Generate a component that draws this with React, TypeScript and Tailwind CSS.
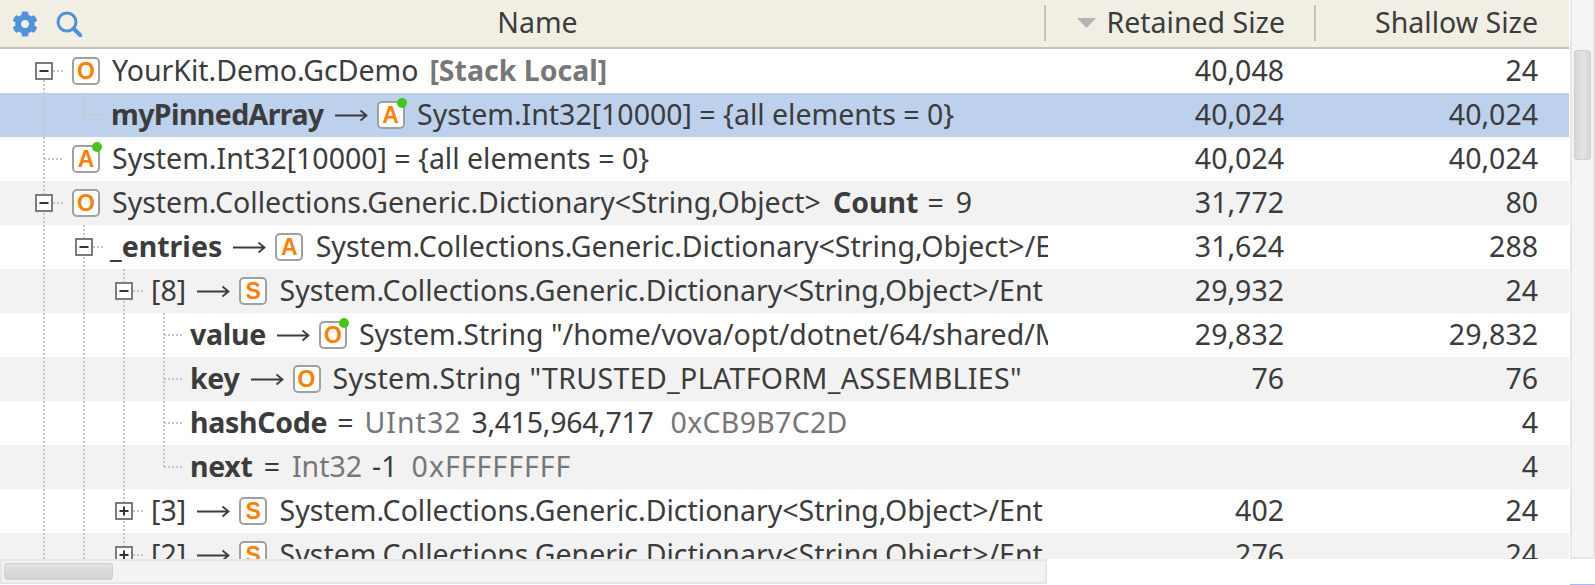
import { FaCog } from "react-icons/fa";

const font = "font-['Noto_Sans',sans-serif]";

type Guide = { v?: [number, number, number][]; h?: [number, number, number][] };

// dotted tree lines, drawn in row coordinates
const TreeLines = ({ v = [], h = [] }: Guide) => (
  <svg className="absolute left-0 top-0 h-[44px] w-[200px]" viewBox="0 0 200 44">
    {v.map(([x, y1, y2], i) => (
      <line key={i} x1={x} x2={x} y1={y1} y2={y2} stroke="#c6c6c6" strokeWidth={2} strokeDasharray="2 2" />
    ))}
    {h.map(([y, x1, x2], i) => (
      <line key={i} x1={x1} x2={x2} y1={y} y2={y} stroke="#c6c6c6" strokeWidth={2} strokeDasharray="2 2" />
    ))}
  </svg>
);

const ToggleBox = ({ x, open }: { x: number; open: boolean }) => (
  <svg className="absolute top-[13px] h-[18px] w-[18px]" style={{ left: x }} viewBox="0 0 18 18">
    <rect x="1" y="1" width="16" height="16" fill="#fff" stroke="#7c7c7c" strokeWidth="2" />
    <path d="M4.5 9h9" stroke="#333" strokeWidth="2" />
    {!open && <path d="M9 4.5v9" stroke="#333" strokeWidth="2" />}
  </svg>
);

const Arrow = () => (
  <svg className="ml-[11px] mr-[9px] h-[14px] w-[33px] shrink-0 translate-y-[1px]" viewBox="0 0 33 14">
    <path d="M0 7.5h31M25.5 2.5l6 5-6 5" fill="none" stroke="#3c3c3c" strokeWidth="1.8" />
  </svg>
);

const TypeIcon = ({ letter, dot }: { letter: string; dot?: boolean }) => (
  <span className="relative flex h-[28px] w-[28px] shrink-0 translate-y-[1px] items-center justify-center rounded-[5px] border-2 border-[#a0a0a0] bg-white font-['Liberation_Sans',sans-serif] text-[23px] font-bold leading-none text-[#ff8000]">
    {letter}
    {dot && <span className="absolute -right-[4px] -top-[5px] h-[10px] w-[10px] rounded-full bg-[#44c818]" />}
  </span>
);

const Bold = ({ children }: { children: React.ReactNode }) => (
  <span className="font-bold tracking-[-0.3px]">{children}</span>
);

type Row = {
  left: number;
  name: React.ReactNode;
  retained: string;
  shallow: string;
  bg: string;
  lines: Guide;
  box?: { x: number; open: boolean };
};

const root: [number, number, number] = [44, 0, 44];
const l1: [number, number, number] = [84, 0, 44];
const l2: [number, number, number] = [124, 0, 44];
const l3: [number, number, number] = [164, 0, 44];
const dict = "System.Collections.Generic.Dictionary<String,Object>";

const rows: Row[] = [
  {
    left: 72,
    bg: "bg-white",
    lines: { v: [[44, 31, 44]], h: [[22, 53, 63]] },
    box: { x: 35, open: true },
    retained: "40,048",
    shallow: "24",
    name: (
      <>
        <TypeIcon letter="O" />
        <span className="ml-[12px]">YourKit.Demo.GcDemo</span>
        <span className="ml-[11px] font-bold text-[#777777]">[Stack Local]</span>
      </>
    ),
  },
  {
    left: 111,
    bg: "bg-[#bdd0ec]",
    lines: { v: [root, [84, 0, 22]], h: [[22, 84, 103]] },
    retained: "40,024",
    shallow: "40,024",
    name: (
      <>
        <span className="font-bold tracking-[-0.6px]">myPinnedArray</span>
        <Arrow />
        <TypeIcon letter="A" dot />
        <span className="ml-[12.5px]">System.Int32[10000] = {"{all elements = 0}"}</span>
      </>
    ),
  },
  {
    left: 72,
    bg: "bg-white",
    lines: { v: [root], h: [[22, 44, 63]] },
    retained: "40,024",
    shallow: "40,024",
    name: (
      <>
        <TypeIcon letter="A" dot />
        <span className="ml-[12px]">System.Int32[10000] = {"{all elements = 0}"}</span>
      </>
    ),
  },
  {
    left: 72,
    bg: "bg-[#f2f2f2]",
    lines: { v: [root], h: [[22, 53, 63]] },
    box: { x: 35, open: true },
    retained: "31,772",
    shallow: "80",
    name: (
      <>
        <TypeIcon letter="O" />
        <span className="ml-[12px]">{dict}</span>
        <span className="ml-[12px] font-bold">Count</span>
        <span className="ml-[9px]">=</span>
        <span className="ml-[12px]">9</span>
      </>
    ),
  },
  {
    left: 110,
    bg: "bg-white",
    lines: { v: [root, l1], h: [[22, 93, 103]] },
    box: { x: 75, open: true },
    retained: "31,624",
    shallow: "288",
    name: (
      <>
        <span className="font-bold">_entries</span>
        <Arrow />
        <TypeIcon letter="A" />
        <span className="ml-[12.5px]">{dict}/E</span>
      </>
    ),
  },
  {
    left: 151,
    bg: "bg-[#f2f2f2]",
    lines: { v: [root, l1, l2], h: [[22, 133, 143]] },
    box: { x: 115, open: true },
    retained: "29,932",
    shallow: "24",
    name: (
      <>
        <span>[8]</span>
        <Arrow />
        <TypeIcon letter="S" />
        <span className="ml-[12.5px]">{dict}/Ent</span>
      </>
    ),
  },
  {
    left: 190,
    bg: "bg-white",
    lines: { v: [root, l1, l2, l3], h: [[22, 164, 183]] },
    retained: "29,832",
    shallow: "29,832",
    name: (
      <>
        <Bold>value</Bold>
        <Arrow />
        <TypeIcon letter="O" dot />
        <span className="ml-[12px]">System.String "/home/vova/opt/dotnet/64/shared/M</span>
      </>
    ),
  },
  {
    left: 190,
    bg: "bg-[#f2f2f2]",
    lines: { v: [root, l1, l2, l3], h: [[22, 164, 183]] },
    retained: "76",
    shallow: "76",
    name: (
      <>
        <Bold>key</Bold>
        <Arrow />
        <TypeIcon letter="O" />
        <span className="ml-[12px] tracking-[0.35px]">System.String "TRUSTED_PLATFORM_ASSEMBLIES"</span>
      </>
    ),
  },
  {
    left: 190,
    bg: "bg-white",
    lines: { v: [root, l1, l2, l3], h: [[22, 164, 183]] },
    retained: "",
    shallow: "4",
    name: (
      <>
        <Bold>hashCode</Bold>
        <span className="ml-[10px]">=</span>
        <span className="ml-[11px] tracking-[1px] text-[#777777]">UInt32</span>
        <span className="ml-[10px] tracking-[-0.3px]">3,415,964,717</span>
        <span className="ml-[17px] tracking-[0.3px] text-[#777777]">0xCB9B7C2D</span>
      </>
    ),
  },
  {
    left: 190,
    bg: "bg-[#f2f2f2]",
    lines: { v: [root, l1, l2, [164, 0, 22]], h: [[22, 164, 183]] },
    retained: "",
    shallow: "4",
    name: (
      <>
        <Bold>next</Bold>
        <span className="ml-[11px]">=</span>
        <span className="ml-[12px] text-[#777777]">Int32</span>
        <span className="ml-[10px]">-1</span>
        <span className="ml-[14px] tracking-[1px] text-[#777777]">0xFFFFFFFF</span>
      </>
    ),
  },
  {
    left: 151,
    bg: "bg-white",
    lines: { v: [root, l1, l2], h: [[22, 133, 143]] },
    box: { x: 115, open: false },
    retained: "402",
    shallow: "24",
    name: (
      <>
        <span>[3]</span>
        <Arrow />
        <TypeIcon letter="S" />
        <span className="ml-[12.5px]">{dict}/Ent</span>
      </>
    ),
  },
  {
    left: 151,
    bg: "bg-[#f2f2f2]",
    lines: { v: [root, l1, l2], h: [[22, 133, 143]] },
    box: { x: 115, open: false },
    retained: "276",
    shallow: "24",
    name: (
      <>
        <span>[2]</span>
        <Arrow />
        <TypeIcon letter="S" />
        <span className="ml-[12.5px]">{dict}/Ent</span>
      </>
    ),
  },
];

export default function App() {
  return (
    <div className={`${font} flex h-[585px] w-[1595px] flex-col overflow-hidden bg-white text-[28.5px] text-[#3c3c3c]`}>
      <div className="flex h-[559px] shrink-0">
        <div className="flex w-[1569px] min-w-0 flex-col">
          <div className="flex h-[49px] shrink-0 items-center border-b-2 border-[#c5c2b6] bg-[#f1efe4] pb-[2px]">
            <div className="flex w-[1046px] shrink-0 items-center">
              <div className="flex w-[85px] shrink-0 translate-y-[1px] items-center gap-[18px] pl-[12px]">
                <FaCog className="h-[26px] w-[26px] text-[#4f92d8]" />
                <svg className="h-[26px] w-[26px]" viewBox="0 0 26 26">
                  <circle cx="11" cy="11" r="9" fill="none" stroke="#4f92d8" strokeWidth="3" />
                  <path d="M17.5 17.5l7 7" stroke="#4f92d8" strokeWidth="4" strokeLinecap="round" />
                </svg>
              </div>
              <div className="-ml-[54px] flex-1 text-center">Name</div>
              <div className="h-[36px] w-[2px] bg-[#c5c2b6]" />
            </div>
            <div className="flex w-[268px] shrink-0 items-center justify-end pr-[29px]">
              <svg className="mr-[10px] h-[10px] w-[19px]" viewBox="0 0 19 10">
                <path d="M0 0h19l-9.5 10z" fill="#b4b4b4" />
              </svg>
              <span>Retained Size</span>
            </div>
            <div className="flex h-[36px] flex-1 items-center justify-end border-l-2 border-[#c5c2b6] pr-[31px]">
              Shallow Size
            </div>
          </div>
          <div className="min-h-0 flex-1 overflow-hidden">
            {rows.map((r, i) => (
              <div key={i} className={`flex h-[44px] items-center ${r.bg}`}>
                <div className="relative flex h-full w-[1048px] shrink-0 items-center overflow-hidden whitespace-nowrap pb-[2px]" style={{ paddingLeft: r.left }}>
                  <TreeLines {...r.lines} />
                  {r.box && <ToggleBox {...r.box} />}
                  {r.name}
                </div>
                <div className="w-[236px] shrink-0 pb-[2px] text-right">{r.retained}</div>
                <div className="w-[254px] shrink-0 pb-[2px] text-right">{r.shallow}</div>
              </div>
            ))}
          </div>
        </div>
        <div className="ml-[1px] flex-1 border-x-2 border-b-2 border-[#e6e6e6] bg-[#f5f5f5] pl-[2px] pr-[2px] pt-[50px]">
          <div className="h-[110px] rounded-[3px] border border-[#cfcfcf] bg-gradient-to-r from-[#d6d6d6] via-[#e4e4e4] to-[#d6d6d6]" />
        </div>
      </div>
      <div className="flex h-[26px] shrink-0 items-start justify-between">
        <div className="h-[25px] w-[1047px] border-2 border-[#e6e6e6] bg-[#f3f3f3] py-[2px] pl-[2px]">
          <div className="h-[17px] w-[109px] rounded-[3px] border border-[#cfcfcf] bg-gradient-to-b from-[#e4e4e4] to-[#d2d2d2]" />
        </div>
        <div className="mt-[25px] h-[1px] w-[25px] bg-[#a8b8f8]" />
      </div>
    </div>
  );
}
